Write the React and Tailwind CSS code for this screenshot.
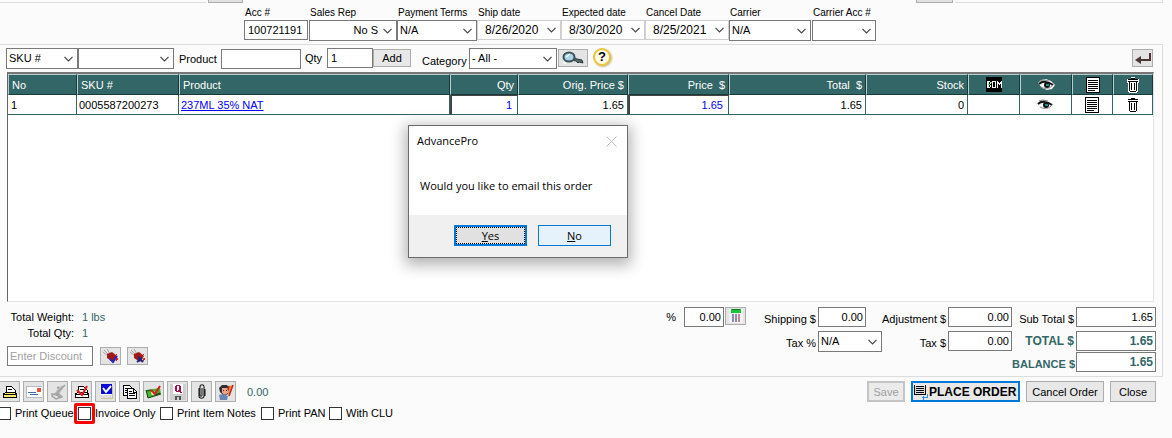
import React, { useState } from "react";

const fieldBorder = "border border-[#7a7a7a] bg-white";

const Chevron = () => (
  <svg
    className="pointer-events-none absolute right-1 top-1/2 h-[6px] w-[9px] -translate-y-1/2"
    viewBox="0 0 9 6"
    fill="none"
    stroke="#444"
  >
    <path d="M0.5 0.8 4.5 4.8 8.5 0.8" strokeWidth="1.2" />
  </svg>
);

const Select = ({ label, id, options, className = "", selectClass = "pr-[14px]" }) => (
  <div className={`relative h-[21px] ${fieldBorder} ${className}`}>
    <select
      id={id}
      aria-label={label}
      className={`block h-[18px] w-full appearance-none bg-transparent pl-[2px] leading-[18px] outline-none ${selectClass}`}
    >
      {options.map((o) => (
        <option key={o}>{o}</option>
      ))}
    </select>
    <Chevron />
  </div>
);

const DateBox = ({ id, value }) => (
  <div className="relative h-5 border border-[#cfcfcf] bg-white">
    <input
      id={id}
      defaultValue={value}
      className="block h-[18px] w-full bg-transparent pl-[7px] pr-4 text-[12px] outline-none"
    />
    <Chevron />
  </div>
);

// Label above a control, as in the order header
const Stacked = ({ label, htmlFor, className, children }) => (
  <div className={className}>
    <label
      htmlFor={htmlFor}
      className="block h-[14px] whitespace-nowrap pl-px text-[10px] leading-[14px]"
    >
      {label}
    </label>
    {children}
  </div>
);

const IconButton = ({ label, className = "", children }) => (
  <button
    type="button"
    aria-label={label}
    className={`flex shrink-0 items-center justify-center border border-[#adadad] bg-[#e4e4e4] ${className}`}
  >
    {children}
  </button>
);

const Icon = ({ w = 16, h = 16, className = "", children }) => (
  <svg
    width={w}
    height={h}
    viewBox={`0 0 ${w} ${h}`}
    className={`shrink-0 ${className}`}
    shapeRendering="crispEdges"
    fill="none"
  >
    {children}
  </svg>
);

const EyeIcon = () => (
  <svg width="17" height="12" viewBox="0 0 17 12" className="mx-auto" fill="none">
    <path d="M0 4l3-3 5-1 5 2 4 4-3 4-5 1-5-2z" fill="#f4f4f4" />
    <path d="M2 2l4-1 5 1" stroke="#888" />
    <path d="M1 5c3-3 9-3 14 1" stroke="#111" strokeWidth="2" />
    <path d="M3 8c3 2 8 2 11-1" stroke="#888" />
    <circle cx="9" cy="6" r="3" fill="#111" />
    <rect x="8" y="5" width="3" height="2" fill="#1f8a8a" />
  </svg>
);

const PageIcon = () => (
  <Icon w={14} h={16} className="mx-auto">
    <rect x="0.5" y="0.5" width="13" height="15" fill="#fff" stroke="#000" />
    <path d="M2 3.5h10M2 5.5h10M2 7.5h10M2 9.5h10M2 11.5h10M2 13.5h7" stroke="#000" />
  </Icon>
);

const TrashIcon = () => (
  <Icon w={12} h={16} className="mx-auto">
    <path d="M0 2h4V0h4v2h4v4h-1v8l-1 2H2l-1-2V6H0z" fill="#fff" />
    <path d="M4 1h4v1H4zM1 2h10v1H1zM1 4h10v1H1zM2 5h1v9H2zM9 5h1v9H9zM3 14h6v1H3zM4 6h1v7H4zM7 6h1v7H7z" fill="#000" />
  </Icon>
);

const BomIcon = () => (
  <Icon w={16} h={15} className="mx-auto">
    <rect width="16" height="15" fill="#000" />
    <path
      fillRule="evenodd"
      d="M1 4h3v1h1v2H4v1h1v2H4v1H1zM3 5v2h1V5zM3 8v2h1V8zM6 4h4v7H6zM7 5v5h2V5z"
      fill="#f0f0f0"
    />
    <path d="M11 4h1v1h1v1h1V5h1V4h1v7h-1V7h-1v1h-1V7h-1v4h-1z" fill="#f0f0f0" />
    <path d="M2 7h2v1H2zM5 5h1v1H5z" fill="#3be03b" />
  </Icon>
);

const ReturnIcon = () => (
  <svg width="16" height="13" viewBox="0 0 16 13" fill="none">
    <path d="M15 1v7H4" stroke="#4a3434" strokeWidth="2" />
    <path d="M0 8l6-4v8z" fill="#4a3434" />
  </svg>
);

const KeyIcon = () => (
  <svg width="22" height="14" viewBox="0 0 22 14" fill="none">
    <path d="M10 6l5 2 5 1 1 3-4-1-1 1-2-2-5-1z" fill="#5b6a6a" stroke="#2c3838" />
    <ellipse cx="7" cy="6" rx="5.500" ry="4.500" fill="#a9d6e6" stroke="#3b5058" strokeWidth="2" />
    <path d="M4 6l4-3M1 11l3 2" stroke="#fff" strokeWidth="1.400" />
  </svg>
);

const CalcIcon = () => (
  <Icon w={14} h={14}>
    <path d="M0 0h14v14H0z" fill="#f2f2f2" />
    <path d="M2 0h10v4H2z" fill="#17c43a" />
    <path d="M3 0.5h8" stroke="#0a7a24" />
    <path d="M3 5h2v8H3zM6 5h2v8H6z" fill="#8c8cb4" />
    <path d="M9 5h2v8H9z" fill="#b88a9c" />
  </Icon>
);

const TagIcon = ({ cross }) => (
  <svg width="18" height="15" viewBox="0 0 18 15" fill="none">
    <path d="M2 1l5 5M5 0l3 5M1 3l4 3" stroke="#a5a5a5" />
    <path d="M5 5l5-2 5 4-4 6-6-4z" fill="#a01818" />
    <path d="M14 5l1 1M15 9l1 1-2 2z" fill="#e01818" stroke="#e01818" />
    {cross ? (
      <path d="M9 8l5 5M13 9l-5 4" stroke="#142a80" strokeWidth="2" />
    ) : (
      <path d="M8 10l3 3 4-6" stroke="#2525b8" strokeWidth="2" />
    )}
  </svg>
);

const PrinterIcon = ({ checked }) => (
  <Icon>
    <path d="M5 3h5l3 3v3H5z" fill="#fff" />
    <path
      d="M4 2h6v1H5v5h8V6h1v3h1v5H1V9h2V8h1zM10 3h1v1h-1zM11 4h1v1h-1zM12 5h1v1h-1zM6 5h4v1H6z"
      fill="#000"
    />
    <path d="M3 9h10v1H3zM2 11h12v2H2z" fill={checked ? "#fff" : "#fbe96c"} />
    {checked && (
      <path d="M3 6l5 5 5-9" stroke="#e01818" strokeWidth="2" shapeRendering="auto" />
    )}
  </Icon>
);

const MailIcon = () => (
  <Icon>
    <path d="M0 2h16v12H0z" fill="#fff" />
    <path d="M0.500 2v12M0 2.500h16M0 13.500h16" stroke="#b4b8c8" />
    <path d="M11 4h4v4h-4z" fill="#e4523e" />
    <path d="M2 8.500h8M4 10.500h8" stroke="#3d68b8" />
  </Icon>
);

const NoteIcon = () => (
  <svg width="16" height="16" viewBox="0 0 16 16" fill="none">
    <path d="M9 3l6-2-6 9-6 2z" fill="#bbb" />
    <path d="M15 1L7 9M7 4l2-1M2 10h7l3 3-6 2-4-3zM5 10l5 3" stroke="#a2a2a2" strokeWidth="1.500" />
  </svg>
);

const CheckDiskIcon = () => (
  <Icon>
    <path d="M3 14h12v1H3zM14 2h1v13h-1z" fill="#c9c49c" />
    <path d="M2 1h12v13H2z" fill="#ddd" />
    <rect x="2" y="0" width="12" height="11" fill="#fff" />
    <rect x="3" y="0" width="11" height="10" fill="#0808d8" />
    <path d="M5 4l3 4 5-6" stroke="#fff" strokeWidth="2" shapeRendering="auto" />
  </Icon>
);

const CopyIcon = () => (
  <Icon>
    <path d="M1.500 1.500h6l3 3v7h-9z" fill="#fff" stroke="#000" />
    <path d="M3 4.500h3M3 6.500h3M3 8.500h3" stroke="#000" />
    <path d="M5.500 4.500h6l3 3v7h-9z" fill="#fff" stroke="#000" />
    <path d="M7 7.500h3M7 9.500h6M7 11.500h6M11.500 5v3h3" stroke="#000" />
  </Icon>
);

const MoneyIcon = () => (
  <svg width="17" height="16" viewBox="0 0 17 16" fill="none">
    <path d="M1 6l14-2 1 6-13 4z" fill="#46b432" />
    <path d="M1 6l2 8 13-4" stroke="#123d10" />
    <path d="M2 7l4-1M10 11l5-2" stroke="#123d10" />
    <circle cx="8" cy="9" r="2" fill="#d5f0c0" />
    <path d="M6 6l4 4 5-8" stroke="#e01818" strokeWidth="2" />
  </svg>
);

const QIcon = () => (
  <Icon>
    <path d="M0 0h16v16H0z" fill="#cfcfcf" />
    <path d="M3 0h10v10H3z" fill="#fff" />
    <path
      d="M6 1h4v1H6zM5 2h2v5H5zM9 2h2v5H9zM6 7h4v1H6zM8 6h1v1H8zM10 7h1v2h-1zM11 8h1v1h-1z"
      fill="#a3124f"
    />
    <path d="M5 12h6v4H9v-3H7v3H5z" fill="#555" />
  </Icon>
);

const ClipIcon = () => (
  <svg width="16" height="16" viewBox="0 0 16 16" fill="none">
    <path
      d="M5 4v8c0 3 5 3 5 0V3c0-3-4-3-4 0v8c0 1.500 2 1.500 2 0V4M11 5v7"
      stroke="#222"
      strokeWidth="1.100"
    />
  </svg>
);

const UserIcon = () => (
  <svg width="16" height="16" viewBox="0 0 16 16" fill="none">
    <path d="M1 4l3-3h5l2 3-1 6-4 2-4-4z" fill="#2d2d38" />
    <path d="M4 4h6v5l-3 2-3-2z" fill="#e8a58c" />
    <path d="M1 11l4-1 5 2-1 4H2z" fill="#6a84b4" />
    <path d="M11 2l4-1-3 9-2 2z" fill="#f08a3c" />
    <path d="M15 1l-4 11M11 2l-1 4" stroke="#b82a18" strokeWidth="1.500" />
    <path d="M5 6.500h1M8 6.500h1" stroke="#333" />
  </svg>
);

const tools = [
  { label: "Print", icon: <PrinterIcon /> },
  { label: "Email", icon: <MailIcon /> },
  { label: "Sign", icon: <NoteIcon /> },
  { label: "Print and confirm", icon: <PrinterIcon checked /> },
  { label: "Confirm", icon: <CheckDiskIcon /> },
  { label: "Copy", icon: <CopyIcon /> },
  { label: "Payment", icon: <MoneyIcon /> },
  { label: "Quote", icon: <QIcon /> },
  { label: "Attach", icon: <ClipIcon /> },
  { label: "Customer", icon: <UserIcon /> },
];

const columns = [
  { title: "No", width: "w-[69px]" },
  { title: "SKU #", width: "w-[102px]" },
  { title: "Product", width: "" },
  { title: "Qty", width: "w-[68px]", right: true },
  { title: "Orig. Price $", width: "w-[110px]", right: true },
  { title: "Price  $", width: "w-[101px]", right: true },
  { title: "Total  $", width: "w-[137px]", right: true },
  { title: "Stock", width: "w-[102px]", right: true },
  { title: "BOM", width: "w-[52px]", icon: <BomIcon /> },
  { title: "View", width: "w-[52px]", icon: <EyeIcon /> },
  { title: "Notes", width: "w-[41px]", icon: <PageIcon /> },
  { title: "Delete", width: "w-[40px]", icon: <TrashIcon /> },
];

const cell = "h-5 border-b border-r border-[#336666] p-0 leading-[18px]";
const editCell =
  "border-l-2 border-t border-l-[#444] border-t-[#444] text-[#0000ff]";

const OrderTable = () => (
  <div className="ml-[7px] mr-[8px] min-h-[230px] border-l border-r border-t-2 border-b border-l-[#666] border-r-[#e3e3e3] border-b-[#e3e3e3] border-t-[#777] bg-white">
    <table className="w-full table-fixed border-separate border-spacing-0">
      <thead>
        <tr>
          {columns.map((c) => (
            <th
              key={c.title}
              aria-label={c.title}
              className={`h-[21px] whitespace-pre border-b border-l border-r border-t border-b-[#173b3b] border-l-[#b9cccc] border-r-[#173b3b] border-t-[#b9cccc] bg-[#336666] px-[3px] py-0 font-normal leading-[18px] text-white ${c.width} ${
                c.icon ? "text-center" : c.right ? "text-right" : "text-left"
              }`}
            >
              {c.icon || c.title}
            </th>
          ))}
        </tr>
      </thead>
      <tbody>
        <tr>
          <td className={`${cell} pl-[3px]`}>1</td>
          <td className={`${cell} pl-[2px]`}>0005587200273</td>
          <td className={`${cell} pl-[2px]`}>
            <a href="#product" className="text-[#0000ff] underline">
              237ML 35% NAT
            </a>
          </td>
          <td className={`${cell} ${editCell} pr-[5px] text-right`}>1</td>
          <td className={`${cell} pr-[3px] text-right`}>1.65</td>
          <td className={`${cell} ${editCell} pr-[5px] text-right`}>1.65</td>
          <td className={`${cell} pr-[3px] text-right`}>1.65</td>
          <td className={`${cell} pr-[3px] text-right`}>0</td>
          <td className={cell}></td>
          <td className={cell}>
            <EyeIcon />
          </td>
          <td className={cell}>
            <PageIcon />
          </td>
          <td className={cell}>
            <TrashIcon />
          </td>
        </tr>
      </tbody>
    </table>
  </div>
);

const AmountLabel = ({ htmlFor, children }) => (
  <label
    htmlFor={htmlFor}
    className="whitespace-nowrap pr-[2px] pt-1 text-right leading-4"
  >
    {children}
  </label>
);

const Amount = ({ id, value, className = "w-full" }) => (
  <input
    id={id}
    defaultValue={value}
    className={`h-5 ${fieldBorder} px-[2px] text-right outline-none ${className}`}
  />
);

const Totals = () => (
  <div className="grid grid-cols-[20px_62px_72px_64px_66px_64px_64px_80px] grid-rows-[24px_21px_20px] items-start">
    <label htmlFor="pct" className="pr-2 pt-[2px] text-right leading-4">
      %
    </label>
    <div className="flex gap-px">
      <Amount id="pct" value="0.00" className="w-10" />
      <IconButton label="Calculate" className="h-[18px] w-[21px]">
        <CalcIcon />
      </IconButton>
    </div>
    <AmountLabel htmlFor="shipping">Shipping $</AmountLabel>
    <Amount id="shipping" value="0.00" className="w-12" />
    <AmountLabel htmlFor="adjustment">Adjustment $</AmountLabel>
    <Amount id="adjustment" value="0.00" />
    <AmountLabel htmlFor="subtotal">Sub Total $</AmountLabel>
    <Amount id="subtotal" value="1.65" />

    <div className="col-span-2" />
    <AmountLabel htmlFor="taxrate">Tax %</AmountLabel>
    <Select id="taxrate" options={["N/A"]} />
    <AmountLabel htmlFor="tax">Tax $</AmountLabel>
    <Amount id="tax" value="0.00" />
    <label
      htmlFor="total"
      className="whitespace-nowrap pr-[2px] pt-[2px] text-right text-[12px] font-bold leading-4 text-[#336666]"
    >
      TOTAL $
    </label>
    <Amount id="total" value="1.65" className="w-full text-[12px] font-bold text-[#336666]" />

    <label
      htmlFor="balance"
      className="col-span-7 whitespace-nowrap pr-px pt-1 text-right font-bold leading-4 text-[#336666]"
    >
      BALANCE $
    </label>
    <Amount id="balance" value="1.65" className="w-full text-[12px] font-bold text-[#336666]" />
  </div>
);

const CheckOption = ({ label, highlighted }) => (
  <label className="flex items-center gap-1 whitespace-nowrap">
    <span className="relative flex">
      <input
        type="checkbox"
        className="h-[13px] w-[13px] appearance-none border border-[#333] bg-white checked:bg-[#0078d7]"
      />
      {highlighted && (
        <span className="pointer-events-none absolute -inset-1 rounded-[2px] border-[3px] border-[#ff0000]" />
      )}
    </span>
    {label}
  </label>
);

const dialogButton = "h-[21px] w-[73px] text-[11px]";

const EmailDialog = ({ onClose }) => (
  <div
    role="dialog"
    aria-label="AdvancePro"
    className="absolute left-[408px] top-[125px] w-[220px] border border-[#6b6b6b] bg-white font-['Open_Sans','Noto_Sans',sans-serif] text-[11px] text-black shadow-[0_4px_14px_3px_rgba(0,0,0,0.3)]"
  >
    <div className="flex items-center justify-between pl-2 pr-[10px] pt-[6px] leading-[18px]">
      <span>AdvancePro</span>
      <button type="button" aria-label="Close dialog" onClick={onClose}>
        <svg width="11" height="11" viewBox="0 0 11 11" stroke="#bcbcbc">
          <path d="M0.500 0.500l10 10M10.500 0.500l-10 10" />
        </svg>
      </button>
    </div>
    <p className="whitespace-nowrap pb-5 pl-[11px] pt-[27px] leading-[18px]">
      Would you like to email this order
    </p>
    <div className="flex justify-end gap-[11px] bg-[#f0f0f0] px-4 pb-[11px] pt-[10px]">
      <button
        type="button"
        onClick={onClose}
        className={`${dialogButton} border-2 border-[#0078d7] bg-[#e1e1e1]`}
      >
        <span className="flex h-full items-center justify-center border border-dotted border-black">
          <span className="underline">Y</span>es
        </span>
      </button>
      <button
        type="button"
        onClick={onClose}
        className={`${dialogButton} border border-[#0078d7] bg-[#e5f1fb]`}
      >
        <span className="underline">N</span>o
      </button>
    </div>
  </div>
);

const footerButton =
  "h-[21px] whitespace-nowrap border border-[#adadad] bg-[#e8e8e8] leading-[18px]";

export default function App() {
  const [dialogOpen, setDialogOpen] = useState(true);

  return (
    <div className="relative min-h-screen overflow-hidden bg-[#fbfbfb] font-['Liberation_Sans',Arial,sans-serif] text-[11px] leading-4 text-black">
      <div className="flex h-[3px] pr-[9px]">
        <div className="w-[206px] border-b border-[#dcdcdc]" />
        <div className="ml-[2px] w-[35px] border border-t-0 border-[#adadad] bg-[#e1e1e1]" />
        <div className="ml-auto w-[37px] border border-t-0 border-[#adadad] bg-[#e1e1e1]" />
        <div className="ml-[2px] w-[208px] border-b border-r border-[#dcdcdc]" />
      </div>

      {/* Order header */}
      <div className="flex items-start pb-[3px] pl-[244px] pt-[3px]">
        <Stacked label="Acc #" htmlFor="acc" className="mr-[1px] w-16">
          <input
            id="acc"
            defaultValue="100721191"
            className={`block h-5 w-full ${fieldBorder} px-[3px] outline-none`}
          />
        </Stacked>
        <Stacked label="Sales Rep" htmlFor="rep" className="w-[88px]">
          <Select
            id="rep"
            options={["No S"]}
            selectClass="pr-[18px] text-right [text-align-last:right]"
          />
        </Stacked>
        <Stacked label="Payment Terms" htmlFor="terms" className="w-20">
          <Select id="terms" options={["N/A"]} />
        </Stacked>
        <Stacked label="Ship date" htmlFor="ship" className="w-[84px]">
          <DateBox id="ship" value="8/26/2020" />
        </Stacked>
        <Stacked label="Expected date" htmlFor="expected" className="w-[84px]">
          <DateBox id="expected" value="8/30/2020" />
        </Stacked>
        <Stacked label="Cancel Date" htmlFor="cancel" className="w-[84px]">
          <DateBox id="cancel" value="8/25/2021" />
        </Stacked>
        <Stacked label="Carrier" htmlFor="carrier" className="mr-[1px] w-[82px]">
          <Select id="carrier" options={["N/A"]} />
        </Stacked>
        <Stacked label="Carrier Acc #" htmlFor="carrieracc" className="w-16">
          <Select id="carrieracc" options={[""]} />
        </Stacked>
      </div>

      <section className="mr-[9px] border-b border-r border-t border-[#dcdcdc] pb-1">
        {/* Product entry */}
        <div className="flex items-start pb-[3px] pl-[6px] pr-[9px] pt-[3px]">
          <Select label="Search by" options={["SKU #"]} className="w-[72px]" />
          <Select label="SKU" options={[""]} className="w-24" />
          <label htmlFor="product" className="ml-[5px] w-[42px] pt-[3px]">
            Product
          </label>
          <input
            id="product"
            className={`mt-px h-5 w-20 ${fieldBorder} px-[3px] outline-none`}
          />
          <label htmlFor="qty" className="ml-1 w-[22px] pt-[2px]">
            Qty
          </label>
          <input
            id="qty"
            defaultValue="1"
            className={`h-5 w-[46px] ${fieldBorder} px-[3px] outline-none`}
          />
          <button
            type="button"
            className="mt-px h-[18px] w-[38px] border border-[#adadad] bg-[#e8e8e8] leading-4"
          >
            Add
          </button>
          <label htmlFor="category" className="ml-[11px] w-[47px] pt-[5px]">
            Category
          </label>
          <Select id="category" options={["- All -"]} className="w-[88px]" />
          <IconButton label="Search" className="ml-px mt-px h-[18px] w-[30px]">
            <KeyIcon />
          </IconButton>
          <button
            type="button"
            className="ml-[5px] h-[18px] w-[18px] rounded-full border-2 border-[#e8c53c] bg-[#fffbe8] text-[13px] font-bold leading-[14px] shadow-[1px_1px_2px_#cbb98c]"
          >
            ?
          </button>
          <IconButton label="Enter" className="ml-auto mt-px h-[18px] w-[21px]">
            <ReturnIcon />
          </IconButton>
        </div>

        <OrderTable />

        <div className="flex items-start justify-between pl-[7px] pr-[6px] pt-[5px]">
          <div>
            <dl className="grid grid-cols-[67px_auto] gap-x-[8px] pt-[2px]">
              <dt className="whitespace-nowrap text-right">Total Weight:</dt>
              <dd className="text-[#336666]">1 lbs</dd>
              <dt className="text-right">Total Qty:</dt>
              <dd className="text-[#336666]">1</dd>
            </dl>
            <div className="flex items-start pt-[5px]">
              <input
                aria-label="Discount"
                placeholder="Enter Discount"
                className={`h-5 w-[86px] ${fieldBorder} px-[2px] outline-none placeholder:text-[#a0a0a0]`}
              />
              <IconButton label="Apply discount" className="ml-[7px] mt-px h-[18px] w-[21px]">
                <TagIcon />
              </IconButton>
              <IconButton label="Remove discount" className="ml-[6px] mt-px h-[18px] w-[21px]">
                <TagIcon cross />
              </IconButton>
            </div>
          </div>
          <Totals />
        </div>
      </section>

      {/* Action bar */}
      <div className="flex items-center pr-4 pt-1">
        <div className="-ml-px flex gap-[3px]">
          {tools.map((t) => (
            <IconButton key={t.label} label={t.label} className="h-[21px] w-[21px]">
              {t.icon}
            </IconButton>
          ))}
        </div>
        <span className="ml-[11px] text-[#336666]">0.00</span>
        <div className="ml-auto flex gap-[6px]">
          <button
            type="button"
            disabled
            className="h-[21px] w-[38px] border-2 border-[#c4c4c4] bg-[#ebebeb] leading-4 text-[#a0a0a0]"
          >
            Save
          </button>
          <button
            type="button"
            className="flex h-[21px] w-[109px] items-center gap-px whitespace-nowrap border-2 border-[#0078d7] bg-[#e8e8e8] pl-px text-[12px] font-bold leading-4"
          >
            <Icon w={14} h={16}>
              <path d="M1 1.500h10v9H1z" fill="#ddd" />
              <path d="M.5.500V11M11.500.500V11M2 2.500h8M2 4.500h8M2 6.500h8M2 8.500h8M0 10.500h12" stroke="#000" />
              <path d="M13.500 10v3.500H8M9.500 11.500v4" stroke="#2f8fe8" />
            </Icon>
            PLACE ORDER
          </button>
          <button type="button" className={`${footerButton} w-[78px]`}>
            Cancel Order
          </button>
          <button type="button" className={`${footerButton} w-[46px]`}>
            Close
          </button>
        </div>
      </div>

      <div className="-ml-[2px] flex items-center pt-[3px]">
        <div className="w-20">
          <CheckOption label="Print Queue" />
        </div>
        <div className="w-[82px]">
          <CheckOption label="Invoice Only" highlighted />
        </div>
        <div className="w-[101px]">
          <CheckOption label="Print Item Notes" />
        </div>
        <div className="w-[68px]">
          <CheckOption label="Print PAN" />
        </div>
        <CheckOption label="With CLU" />
      </div>

      {dialogOpen && <EmailDialog onClose={() => setDialogOpen(false)} />}
    </div>
  );
}
